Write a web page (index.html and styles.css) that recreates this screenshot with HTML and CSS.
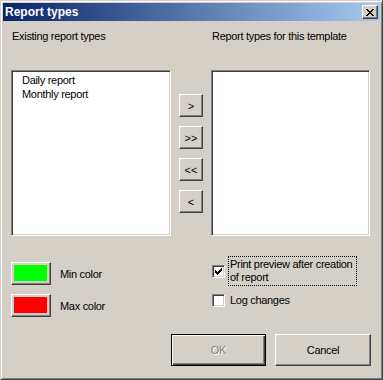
FILE: index.html
```html
<!DOCTYPE html>
<html>
<head>
  <link rel="stylesheet" href="styles.css">
</head>
<body>

<div class="window">
  <div class="titlebar">
    <span class="title">Report types</span>
    <button class="close" type="button">
      <svg width="8" height="7" viewBox="0 0 8 7" shape-rendering="crispEdges">
        <path d="M0 0h2v1H0z M6 0h2v1H6z M1 1h2v1H1z M5 1h2v1H5z M2 2h4v1H2z M3 3h2v1H3z M2 4h4v1H2z M1 5h2v1H1z M5 5h2v1H5z M0 6h2v1H0z M6 6h2v1H6z" fill="#000"/>
      </svg>
    </button>
  </div>

  <div class="content">
    <div class="headings">
      <span class="heading-left">Existing report types</span>
      <span class="heading-right">Report types for this template</span>
    </div>

    <div class="lists">
      <div class="listbox">
        <div class="item">Daily report</div>
        <div class="item">Monthly report</div>
      </div>
      <div class="movers">
        <button class="btn mover" type="button">&gt;</button>
        <button class="btn mover" type="button">&gt;&gt;</button>
        <button class="btn mover" type="button">&lt;&lt;</button>
        <button class="btn mover" type="button">&lt;</button>
      </div>
      <div class="listbox right"></div>
    </div>

    <div class="options">
      <div class="colors">
        <div class="color-row">
          <button class="btn swatch" type="button"><span class="fill green"></span></button>
          <span>Min color</span>
        </div>
        <div class="color-row">
          <button class="btn swatch" type="button"><span class="fill red"></span></button>
          <span>Max color</span>
        </div>
      </div>
      <div class="checks">
        <div class="check-row">
          <span class="checkbox">
            <svg width="7" height="7" viewBox="0 0 7 7" shape-rendering="crispEdges">
              <path d="M0 2h1v3H0z M1 3h1v3H1z M2 4h1v3H2z M3 3h1v3H3z M4 2h1v3H4z M5 1h1v3H5z M6 0h1v3H6z" fill="#000"/>
            </svg>
          </span>
          <span class="check-label focus">Print preview after creation<br>of report</span>
        </div>
        <div class="check-row second">
          <span class="checkbox"></span>
          <span class="check-label">Log changes</span>
        </div>
      </div>
    </div>

    <div class="actions">
      <button class="btn action default" type="button" disabled>OK</button>
      <button class="btn action" type="button">Cancel</button>
    </div>
  </div>
</div>

</body>
</html>
```

FILE: styles.css
```css
* {
  box-sizing: border-box;
}

body {
  margin: 0;
  padding: 0;
  font-family: 'Liberation Sans', Arial, sans-serif;
  font-size: 11px;
  letter-spacing: -0.3px;
  color: #000;
  background: #d4d0c8;
}

.window {
  width: 383px;
  height: 380px;
  background: #d4d0c8;
  border: 1px solid;
  border-color: #d4d0c8 #404040 #404040 #d4d0c8;
  box-shadow: inset 1px 1px #fff, inset -1px -1px #808080;
  padding: 2px;
}

.titlebar {
  height: 18px;
  background: linear-gradient(to right, #0a246a, #a6caf0);
  display: flex;
  align-items: center;
  justify-content: space-between;
  padding: 0 2px 0 2px;
}

.title {
  color: #fff;
  font-weight: bold;
  font-size: 12px;
  letter-spacing: 0;
  line-height: 18px;
}

.close {
  width: 16px;
  height: 14px;
  padding: 0;
  margin: 0;
  background: #d4d0c8;
  border: 1px solid;
  border-color: #fff #404040 #404040 #fff;
  box-shadow: inset -1px -1px #808080;
  display: flex;
  align-items: center;
  justify-content: center;
}

.content {
  padding: 9px 9px 0 8px;
}

.headings {
  display: flex;
  height: 13px;
  line-height: 13px;
}

.heading-left {
  width: 200px;
  padding-left: 1px;
}

.heading-right {
  padding-left: 1px;
}

.lists {
  display: flex;
  margin-top: 27px;
}

.listbox {
  width: 160px;
  height: 166px;
  background: #fff;
  border: 1px solid;
  border-color: #808080 #fff #fff #808080;
  box-shadow: inset 1px 1px #404040, inset -1px -1px #d4d0c8;
  padding: 2px 0 0 10px;
}

.listbox.right {
  width: 159px;
}

.item {
  line-height: 14px;
  height: 14px;
}

.movers {
  display: flex;
  flex-direction: column;
  gap: 9px;
  padding-top: 24px;
  margin: 0 8px;
}

.btn {
  font-family: inherit;
  font-size: 11px;
  letter-spacing: inherit;
  color: #000;
  background: #d4d0c8;
  border: 1px solid;
  border-color: #fff #404040 #404040 #fff;
  box-shadow: inset -1px -1px #808080;
  padding: 0;
  margin: 0;
}

.mover {
  width: 24px;
  height: 23px;
  line-height: 20px;
  letter-spacing: 0;
}

.options {
  display: flex;
  height: 98px;
}

.colors {
  width: 200px;
  padding-top: 26px;
  display: flex;
  flex-direction: column;
  gap: 9px;
}

.color-row {
  display: flex;
  align-items: center;
  gap: 9px;
}

.swatch {
  width: 40px;
  height: 23px;
  padding: 2px 3px 3px 2px;
}

.fill {
  display: block;
  width: 100%;
  height: 100%;
}

.fill.green {
  background: #00ff00;
}

.fill.red {
  background: #ff0000;
}

.checks {
  padding-top: 20px;
}

.check-row {
  display: flex;
  align-items: center;
}

.check-row.second {
  margin-top: 6px;
}

.checkbox {
  width: 13px;
  height: 13px;
  background: #fff;
  border: 1px solid;
  border-color: #808080 #fff #fff #808080;
  box-shadow: inset 1px 1px #404040, inset -1px -1px #d4d0c8;
  display: flex;
  align-items: center;
  justify-content: center;
  margin: 0 3px 0 1px;
}

.check-label {
  line-height: 13px;
  padding: 1px 1px;
  border: 1px solid transparent;
  white-space: nowrap;
}

.check-label.focus {
  width: 129px;
  border: 1px dotted #000;
}

.actions {
  display: flex;
  justify-content: flex-end;
  gap: 9px;
}

.action {
  width: 96px;
  height: 32px;
}

.default {
  width: 95px;
  border: 1px solid #000;
  box-shadow: inset 1px 1px #fff, inset -1px -1px #404040, inset -2px -2px #808080;
  color: #808080;
  text-shadow: 1px 1px #fff;
}
```
